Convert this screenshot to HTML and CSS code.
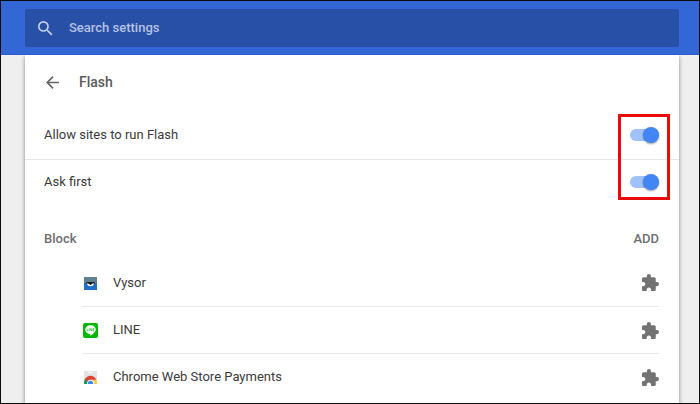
FILE: index.html
```
<!DOCTYPE html>
<html lang="en">
<head>
<meta charset="utf-8">
<meta name="viewport" content="width=device-width, initial-scale=1">
<title>Settings - Flash</title>
<link rel="stylesheet" href="styles.css">
</head>
<body>
<header class="toolbar">
  <label class="search">
    <svg class="search-icon" viewBox="3 3 18 18" aria-hidden="true"><path d="M15.5 14h-.79l-.28-.27A6.47 6.47 0 0 0 16 9.5 6.5 6.5 0 1 0 9.5 16c1.61 0 3.09-.59 4.23-1.57l.27.28v.79l5 4.99L20.49 19l-4.99-5zm-6 0C7.01 14 5 11.99 5 9.5S7.01 5 9.5 5 14 7.01 14 9.5 11.99 14 9.5 14z"/></svg>
    <input class="search-input" type="search" placeholder="Search settings" aria-label="Search settings">
  </label>
</header>
<main class="card">
  <div class="title-row">
    <button class="icon-button" type="button" aria-label="Back">
      <svg class="back-icon" viewBox="4 4 16 16" aria-hidden="true"><path d="M20 11H7.83l5.59-5.59L12 4l-8 8 8 8 1.41-1.41L7.83 13H20v-2z"/></svg>
    </button>
    <h1 class="title">Flash</h1>
  </div>
  <section class="options">
    <div class="option">
      <label for="allow">Allow sites to run Flash</label>
      <input class="toggle" id="allow" type="checkbox" role="switch" checked>
    </div>
    <div class="option">
      <label for="ask">Ask first</label>
      <input class="toggle" id="ask" type="checkbox" role="switch" checked>
    </div>
    <div class="highlight"></div>
  </section>
  <section class="block">
    <div class="block-head">
      <h2 class="block-title">Block</h2>
      <button class="add" type="button">ADD</button>
    </div>
    <ul class="sites">
      <li class="site">
        <svg class="site-icon" viewBox="0 0 16 16" aria-hidden="true">
          <path fill="#5f8190" d="M2 2h13v7H2z"/><path fill="#1f6fc8" d="M2 8h13v7H2z"/>
          <path fill="#16191c" d="M4.500 7h8v2h-8z"/>
          <path fill="#fff" d="M5 8c1 .7 2 .9 2 .9h3s1-.2 2-.9c0 2-1.500 3.300-3.500 3.300S5 10 5 8z"/>
          <circle cx="8.500" cy="8.600" r="1.300" fill="#16191c"/>
        </svg>
        <span class="site-name">Vysor</span>
        <svg class="extension" viewBox="2 1 21 21" aria-hidden="true"><path d="M20.500 11H19V7c0-1.100-.9-2-2-2h-4V3.500a2.500 2.500 0 0 0-5 0V5H4c-1.100 0-1.990.9-1.990 2v3.800H3.500c1.490 0 2.700 1.210 2.700 2.700s-1.210 2.700-2.700 2.700H2V20c0 1.100.9 2 2 2h3.800v-1.500c0-1.490 1.210-2.700 2.700-2.700s2.700 1.210 2.700 2.700V22H17c1.100 0 2-.9 2-2v-4h1.500a2.500 2.500 0 0 0 0-5z"/></svg>
      </li>
      <li class="site">
        <svg class="site-icon" viewBox="0 0 16 16" aria-hidden="true">
          <rect x="1" y="1" width="15" height="15" rx="2" fill="#00b900"/>
          <path fill="#fff" d="M8.500 3.200c3 0 5.300 1.900 5.300 4.400 0 2.300-2.600 4.400-5 6-.5.300-.6.100-.5-.4l.1-1.100c-2.900 0-5.200-2-5.200-4.500s2.300-4.400 5.300-4.400z"/>
          <path fill="none" stroke="#00b900" stroke-width=".6" d="M5 6.500v2.300h1.300M7.300 6.500v2.300M8.300 8.800V6.500l1.400 2.300V6.500M12.300 6.500H11v2.300h1.300M11 7.700h1.300"/>
        </svg>
        <span class="site-name">LINE</span>
        <svg class="extension" viewBox="2 1 21 21" aria-hidden="true"><path d="M20.500 11H19V7c0-1.100-.9-2-2-2h-4V3.500a2.500 2.500 0 0 0-5 0V5H4c-1.100 0-1.990.9-1.990 2v3.800H3.500c1.490 0 2.700 1.210 2.700 2.700s-1.210 2.700-2.700 2.700H2V20c0 1.100.9 2 2 2h3.800v-1.500c0-1.490 1.210-2.700 2.700-2.700s2.700 1.210 2.700 2.700V22H17c1.100 0 2-.9 2-2v-4h1.500a2.500 2.500 0 0 0 0-5z"/></svg>
      </li>
      <li class="site">
        <svg class="site-icon" viewBox="0 0 16 16" aria-hidden="true">
          <path fill="#e4e4e4" d="M2 2h13v13H2z"/><path fill="#fff" d="M6.500 3h4v1h-4z"/>
          <path fill="#0f9d58" d="M2 15c0-2.500.5-4.500 1.600-5.700L6.500 14v1z"/>
          <path fill="#ffcd40" d="M10 10.500h4.500c.4 1.200.5 2.500.5 4.500h-5z"/>
          <path fill="#db4437" d="M3 10c1-1.900 3.100-3.200 5.500-3.200s4.700 1.400 5.800 3.900H8.500c-1.500 0-2.700 1-3 2.600z"/>
          <path fill="#fff" d="M5 15a3.500 4 0 0 1 7 0z"/>
          <path fill="#4285f4" d="M5.800 15a2.700 3.200 0 0 1 5.400 0z"/>
        </svg>
        <span class="site-name">Chrome Web Store Payments</span>
        <svg class="extension" viewBox="2 1 21 21" aria-hidden="true"><path d="M20.500 11H19V7c0-1.100-.9-2-2-2h-4V3.500a2.500 2.500 0 0 0-5 0V5H4c-1.100 0-1.990.9-1.990 2v3.800H3.500c1.490 0 2.700 1.210 2.700 2.700s-1.210 2.700-2.700 2.700H2V20c0 1.100.9 2 2 2h3.800v-1.500c0-1.490 1.210-2.700 2.700-2.700s2.700 1.210 2.700 2.700V22H17c1.100 0 2-.9 2-2v-4h1.500a2.500 2.500 0 0 0 0-5z"/></svg>
      </li>
    </ul>
  </section>
</main>
</body>
</html>
```
FILE: styles.css
```
* {
  box-sizing: border-box;
}

body {
  display: flex;
  flex-direction: column;
  min-height: 100vh;
  margin: 0;
  border: 1px solid #0c0c0c;
  background: #efefef;
  color: #3a3a3a;
  font: 13px/20px Roboto, "Liberation Sans", sans-serif;
}

button {
  padding: 0;
  border: 0;
  background: none;
  color: inherit;
  font: inherit;
}

.toolbar {
  padding: 8px 20px 7px 24px;
  border-bottom: 1px solid #2a5dcd;
  background: #3367d6;
}

.search {
  display: flex;
  align-items: center;
  gap: 16px;
  height: 38px;
  padding: 0 13px;
  border-radius: 2px;
  background: #2850a7;
}

.search-icon {
  width: 15px;
  height: 15px;
  fill: #c3cfe8;
}

.search-input {
  flex: 1;
  min-width: 0;
  padding: 0;
  border: 0;
  outline: 0;
  background: none;
  color: #fff;
  font: 500 13px/20px Roboto, "Liberation Sans", sans-serif;
}

.search-input::placeholder {
  color: #b4c2e2;
  opacity: 1;
}

.card {
  flex: 1;
  margin: 0 20px 0 24px;
  background: #fff;
  box-shadow: 0 2px 4px rgba(0, 0, 0, .45);
  clip-path: inset(0 -8px 0 -8px);
}

.title-row {
  display: flex;
  align-items: center;
  gap: 20px;
  height: 54px;
  padding: 0 21px;
}

.icon-button {
  display: flex;
}

.back-icon {
  width: 13px;
  height: 13px;
  fill: #666;
}

.title {
  margin: 0;
  color: #5a5a5a;
  font-size: 14px;
  font-weight: 500;
}

.options {
  position: relative;
  padding-top: 3px;
}

.option {
  display: flex;
  align-items: center;
  justify-content: space-between;
  height: 47px;
  padding: 0 20px 2px 19px;
}

.option + .option {
  border-top: 1px solid #e8e8e8;
}

.toggle {
  appearance: none;
  display: flex;
  align-items: center;
  justify-content: flex-end;
  width: 29px;
  height: 12px;
  margin: 0;
  border-radius: 6px;
  background: #a0c2fa;
}

.toggle::before {
  content: "";
  flex: none;
  width: 16px;
  height: 16px;
  border-radius: 50%;
  background: #4285f4;
  box-shadow: 0 1px 2px rgba(0, 0, 0, .4);
}

.toggle:not(:checked) {
  justify-content: flex-start;
}

.highlight {
  position: absolute;
  top: 5px;
  right: 9px;
  width: 52px;
  height: 86px;
  border: 3px solid #e80c08;
  pointer-events: none;
}

.block {
  padding: 12px 20px 0 19px;
}

.block-head {
  display: flex;
  align-items: center;
  justify-content: space-between;
  height: 41px;
  color: #6e6e6e;
  font-weight: 500;
}

.block-title {
  margin: 0;
  font-size: 13px;
  font-weight: 500;
}

.sites {
  margin: 0;
  padding: 0 0 0 38px;
  list-style: none;
}

.site {
  display: flex;
  align-items: center;
  height: 47px;
}

.site + .site {
  border-top: 1px solid #e8e8e8;
}

.site-icon {
  width: 16px;
  height: 16px;
  margin-right: 15px;
}

.site-name {
  flex: 1;
}

.extension {
  width: 17px;
  height: 17px;
  fill: #737373;
}
```
